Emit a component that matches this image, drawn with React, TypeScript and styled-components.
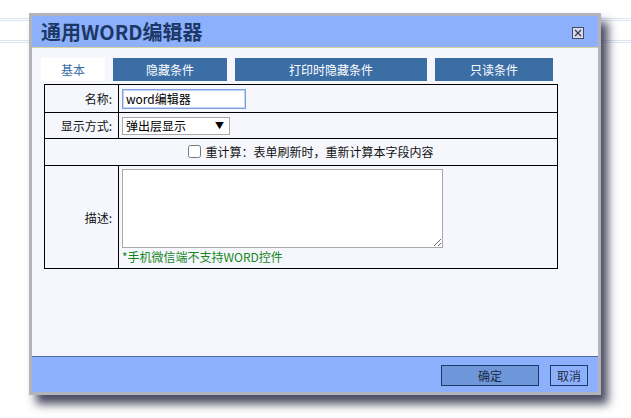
import React from "react";
import styled, { createGlobalStyle } from "styled-components";

const GlobalStyle = createGlobalStyle`
  html, body {
    margin: 0;
    padding: 0;
    background: #ffffff;
  }
  body {
    font-family: "Noto Sans CJK SC", "Liberation Sans", sans-serif;
    font-size: 12px;
    color: #111;
  }
`;

const Page = styled.div`
  width: 631px;
  height: 418px;
  box-sizing: border-box;
  padding: 13px 0 0 29px;
  overflow: hidden;
  background-color: #fff;
  background-image:
    linear-gradient(#dde4f2, #dde4f2),
    linear-gradient(#dde4f2, #dde4f2),
    linear-gradient(#dde4f2, #dde4f2),
    linear-gradient(#dde4f2, #dde4f2);
  background-repeat: no-repeat;
  background-size: 100% 1px;
  background-position: 0 18px, 0 20px, 0 40px, 0 42px;
`;

const Dialog = styled.div`
  width: 572px;
  height: 382px;
  box-sizing: border-box;
  border: 3px solid #b3b3bb;
  background: #f5f7fc;
  display: flex;
  flex-direction: column;
  box-shadow: 7px 9px 9px rgba(30, 30, 60, 0.8);
`;

const Header = styled.div`
  height: 31px;
  flex: none;
  background: #8cb0fc;
  border-bottom: 1px solid #d8d29a;
  display: flex;
  align-items: center;
  justify-content: space-between;
  padding: 0 14px 0 9px;
`;

const Title = styled.h1`
  margin: 0;
  font-family: "Noto Sans CJK SC", sans-serif;
  font-size: 20px;
  font-weight: 700;
  color: #1c3866;
  line-height: 1;
`;

const CloseButton = styled.button`
  width: 12px;
  height: 12px;
  padding: 0;
  border: none;
  background: none;
  display: block;
  margin-top: 2px;
`;

const Body = styled.div`
  flex: 1;
  padding: 10px 0 0 9px;
  display: flex;
  flex-direction: column;
`;

const Tabs = styled.div`
  display: flex;
  gap: 8px;
  height: 23px;
`;

const Tab = styled.div<{ $active?: boolean; $w: number }>`
  width: ${(p) => p.$w}px;
  display: flex;
  align-items: center;
  justify-content: center;
  font-size: 12px;
  background: ${(p) => (p.$active ? "#ffffff" : "#3b6ea5")};
  color: ${(p) => (p.$active ? "#3b6ea5" : "#ffffff")};
`;

const FormTable = styled.table`
  margin: 3px 0 0 3px;
  width: 514px;
  border-collapse: collapse;
  font-size: 12px;
  td {
    border: 1px solid #000;
    padding: 0;
  }
`;

const Row = styled.tr<{ $h: number }>`
  height: ${(p) => p.$h}px;
`;

const LabelCell = styled.td`
  width: 74px;
  text-align: right;
  padding-right: 6px !important;
  box-sizing: border-box;
  vertical-align: middle;
`;

const FieldCell = styled.td`
  padding-left: 3px !important;
  vertical-align: middle;
`;

const TopFieldCell = styled.td`
  padding: 3px 0 3px 3px !important;
  vertical-align: top;
`;

const CenterCell = styled.td`
  text-align: center;
  vertical-align: middle;
`;

const TextInput = styled.input`
  width: 124px;
  height: 20px;
  box-sizing: border-box;
  border: 1px solid #7aa0e0;
  outline: 1px solid #c5d6f4;
  outline-offset: -2px;
  padding: 0 3px;
  font-family: "Noto Sans CJK SC", sans-serif;
  font-size: 12px;
  color: #000;
  background: #fff;
  display: block;
`;

const SelectWrap = styled.div`
  position: relative;
  width: 108px;
  height: 18px;
`;

const Select = styled.select`
  appearance: none;
  width: 108px;
  height: 18px;
  box-sizing: border-box;
  border: 1px solid #a9a9a9;
  background: #fff;
  padding: 0 0 0 3px;
  font-family: "Noto Sans CJK SC", sans-serif;
  font-size: 12px;
  color: #000;
  line-height: 16px;
  display: block;
`;

const Arrow = styled.span`
  position: absolute;
  right: 6px;
  top: 0;
  font-size: 9px;
  line-height: 18px;
  color: #000;
  pointer-events: none;
`;

const CheckLabel = styled.label`
  display: inline-flex;
  align-items: center;
  gap: 4px;
  margin-left: 20px;
  input {
    margin: 0;
    width: 13px;
    height: 13px;
    accent-color: #888;
  }
`;

const TextArea = styled.textarea`
  display: block;
  width: 321px;
  height: 79px;
  box-sizing: border-box;
  border: 1px solid #a9a9a9;
  background: #fff;
  margin: 0;
`;

const Hint = styled.div`
  color: #15861c;
  font-size: 12px;
  line-height: 16px;
  margin-top: 1px;
`;

const Footer = styled.div`
  height: 35px;
  flex: none;
  background: #8cb0fc;
  border-top: 1px solid #4f6dab;
  display: flex;
  align-items: center;
  justify-content: flex-end;
  gap: 11px;
  padding-right: 10px;
`;

const FooterButton = styled.button<{ $primary?: boolean; $w: number }>`
  width: ${(p) => p.$w}px;
  height: 21px;
  box-sizing: border-box;
  border: 1px solid #1e3a6c;
  background: ${(p) => (p.$primary ? "#6d97d8" : "#8cb0fc")};
  color: #1e2b45;
  font-family: "Noto Sans CJK SC", sans-serif;
  font-size: 12px;
  padding: 0;
  margin-top: 1px;
`;

const CloseIcon = () => (
  <svg width="12" height="12" viewBox="0 0 12 12">
    <rect x="0.5" y="0.5" width="11" height="11" fill="#d6d8ee" stroke="#4a4a5e" />
    <path d="M3 3 L9 9 M9 3 L3 9" stroke="#3a3a4e" strokeWidth="1.2" />
  </svg>
);

export default function App() {
  return (
    <>
      <GlobalStyle />
      <Page>
        <Dialog>
          <Header>
            <Title>通用WORD编辑器</Title>
            <CloseButton aria-label="关闭">
              <CloseIcon />
            </CloseButton>
          </Header>
          <Body>
            <Tabs>
              <Tab $active $w={64}>基本</Tab>
              <Tab $w={114}>隐藏条件</Tab>
              <Tab $w={192}>打印时隐藏条件</Tab>
              <Tab $w={118}>只读条件</Tab>
            </Tabs>
            <FormTable>
              <tbody>
                <Row $h={28}>
                  <LabelCell>名称:</LabelCell>
                  <FieldCell>
                    <TextInput defaultValue="word编辑器" />
                  </FieldCell>
                </Row>
                <Row $h={26}>
                  <LabelCell>显示方式:</LabelCell>
                  <FieldCell>
                    <SelectWrap>
                      <Select defaultValue="popup">
                        <option value="popup">弹出层显示</option>
                      </Select>
                      <Arrow>▼</Arrow>
                    </SelectWrap>
                  </FieldCell>
                </Row>
                <Row $h={27}>
                  <CenterCell colSpan={2}>
                    <CheckLabel>
                      <input type="checkbox" />
                      重计算：表单刷新时，重新计算本字段内容
                    </CheckLabel>
                  </CenterCell>
                </Row>
                <Row $h={103}>
                  <LabelCell>描述:</LabelCell>
                  <TopFieldCell>
                    <TextArea />
                    <Hint>*手机微信端不支持WORD控件</Hint>
                  </TopFieldCell>
                </Row>
              </tbody>
            </FormTable>
          </Body>
          <Footer>
            <FooterButton $primary $w={98}>确定</FooterButton>
            <FooterButton $w={38}>取消</FooterButton>
          </Footer>
        </Dialog>
      </Page>
    </>
  );
}
